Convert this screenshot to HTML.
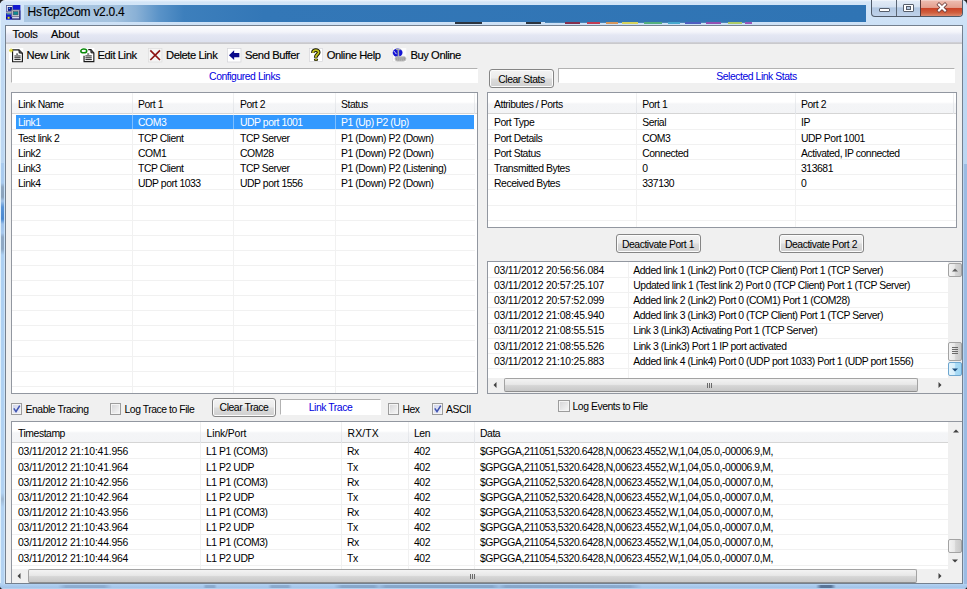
<!DOCTYPE html>
<html><head><meta charset="utf-8"><title>HsTcp2Com v2.0.4</title>
<style>
html,body{margin:0;padding:0;}
body{width:967px;height:589px;overflow:hidden;position:relative;background:#222;font-family:"Liberation Sans",sans-serif;font-size:10px;color:#000;}
div{position:absolute;box-sizing:border-box;white-space:nowrap;}
#frame{left:0;top:0;width:967px;height:589px;background:linear-gradient(#eef6fd 0,#d3e5f7 2px,#cde1f6 24px,#c0d9f3 60px,#b7d3f0 300px,#b4d2f1 589px);border-radius:5px 5px 4px 4px;overflow:hidden;}
#fl{left:0;top:3px;width:1px;height:580px;background:#dff0fc;}
#fl3{left:1px;top:163px;width:3.6px;height:421px;background:linear-gradient(#aacbee 0,#a9caee 20px,#8ea6c0 24px,#8aa2bc 34px,#a4c4e8 38px,#5a94d6 44px,#4a88d0 56px,#9fc2ea 61px,#a8c9ee 70px,#8fa8c4 74px,#8ea8c4 86px,#add0f2 92px,#b2d2f2 330px,#9fb8d2 336px,#b2d2f2 344px,#b4d3f2 421px);}
#fb2{left:0;top:585px;width:967px;height:3px;filter:blur(0.6px);background:linear-gradient(90deg,rgba(110,140,175,0) 0,rgba(110,140,175,0) 58px,rgba(110,140,175,.45) 66px,rgba(110,140,175,.45) 104px,rgba(110,140,175,0) 112px,rgba(110,140,175,0) 203px,rgba(110,140,175,.5) 206px,rgba(110,140,175,.5) 214px,rgba(110,140,175,0) 217px,rgba(110,140,175,0) 268px,rgba(110,140,175,.5) 272px,rgba(110,140,175,.5) 288px,rgba(110,140,175,0) 292px,rgba(110,140,175,0) 334px,rgba(110,140,175,.55) 342px,rgba(110,140,175,.55) 374px,rgba(110,140,175,.2) 379px,rgba(110,140,175,.55) 386px,rgba(110,140,175,.55) 492px,rgba(110,140,175,.2) 499px,rgba(110,140,175,.55) 506px,rgba(110,140,175,.5) 630px,rgba(110,140,175,0) 642px,rgba(70,95,130,0) 816px,rgba(70,95,130,.8) 821px,rgba(70,95,130,.8) 831px,rgba(70,95,130,0) 836px);}
#fl2{left:4px;top:24px;width:1px;height:560px;background:#cbe3f9;}
#fr{left:963px;top:164px;width:4px;height:425px;background:linear-gradient(90deg,#b9d4f0 0,#b9d4f0 1px,#9bbbe2 1px);}
#fb{left:0;top:584px;width:967px;height:5px;background:linear-gradient(#b4d3f2 0,#a9c9ed 2px,#a3c3e8 4px,#c4dcf4 5px);}
#glass{left:24px;top:5px;width:842px;height:17px;background:linear-gradient(90deg,#abc7e2 0,#a5c3df 90px,#8ab1d6 112px,#5a93c8 135px,#3d7fbc 160px,#3377b7 240px,#2f74b4 842px);}
#client{left:5px;top:25px;width:958px;height:559px;background:#f0f0f0;border:1px solid #74808f;}
#menubar{left:6px;top:26px;width:956px;height:18px;background:linear-gradient(#fdfdfe 0,#f3f4fa 6px,#e4e7f3 9px,#dde1ef 15.5px,#d2d3da 16px,#c9c9cd 17.5px,#e6e6e8 18px);}
.seg{font-size:11.2px;letter-spacing:-0.42px;color:#000;-webkit-text-stroke:0.15px #000;}
.lst{background:#fff;border:1px solid #9297a0;}
.gl{height:1px;background:#f1f1f1;}
.vl{width:1px;background:#f1f1f1;}
.hdr{background:linear-gradient(#fff 0,#fff 45%,#f4f5f7 55%,#f3f4f6 100%);border-bottom:1px solid #d5d5d5;}
.ht{font-size:10.4px;letter-spacing:-0.45px;padding-top:1px;}
.hs{width:1px;background:linear-gradient(#f2f2f2,#e0e3e8);}
.c{font-size:10.4px;letter-spacing:-0.45px;height:15px;line-height:15px;}
.ts{letter-spacing:-0.2px;}
.gp{letter-spacing:-0.41px;}
.w{color:#fff;}
.lbl{background:#fff;padding-top:0.8px;border-top:1px solid #b2b2b2;border-left:1px solid #b2b2b2;border-bottom:1px solid #fff;border-right:1px solid #fff;color:#0000e0;font-size:10.4px;letter-spacing:-0.45px;text-align:center;}
.btn{border:1px solid #858585;border-radius:3px;background:linear-gradient(#f3f3f3 0,#ebebeb 48%,#dddddd 52%,#cfcfcf 100%);box-shadow:inset 0 0 0 1px #fcfcfc;font-size:10.4px;letter-spacing:-0.45px;text-align:center;}
.cb{width:11.4px;height:11.4px;border:1px solid #9c9c9c;background:linear-gradient(135deg,#d4d4d6,#f8f8f8);box-shadow:inset 0 0 0 1px #f4f4f4;}
.cbk{background:linear-gradient(135deg,#cfd3ea,#f0f1fa);}
.cbt{font-size:10.4px;letter-spacing:-0.45px;height:13px;line-height:13px;}
.sb{background:#f0f0f0;}
.th{border:1px solid #a3a3a3;border-bottom-color:#8e8e8e;border-radius:2px;background:linear-gradient(#f3f3f3 0,#e8e8e8 45%,#d6d6d6 55%,#c8c8c8 100%);}
.tv{border:1px solid #a3a3a3;border-radius:2px;background:linear-gradient(90deg,#f3f3f3 0,#e8e8e8 45%,#d6d6d6 55%,#c8c8c8 100%);}
svg{position:absolute;overflow:visible;}
</style></head><body>
<div id="frame"><div id="fl"></div><div id="fl3"></div><div id="fl2"></div><div id="fr"></div><div id="fb"></div><div id="fb2"></div></div>
<div id="glass"></div>
<div id="bits" style="left:440px;top:21.4px;width:320px;height:2.2px;filter:blur(0.6px);opacity:.85">
<div style="left:15px;top:0.4px;width:27px;height:1.8px;background:#10161e"></div>
<div style="left:86px;top:0.4px;width:15px;height:1.8px;background:#10161e"></div>
<div style="left:105px;top:0;width:207px;height:1.2px;background:#3577b0"></div>
<div style="left:125px;top:0.6px;width:15px;height:1.6px;background:#7a1030"></div>
<div style="left:147px;top:0.6px;width:13px;height:1.6px;background:#c02038"></div>
<div style="left:166px;top:0.8px;width:12px;height:1.4px;background:#d88a40"></div>
<div style="left:182px;top:0.8px;width:16px;height:1.4px;background:#d8d040"></div>
<div style="left:204px;top:0.8px;width:18px;height:1.4px;background:#40a868"></div>
<div style="left:228px;top:0.8px;width:12px;height:1.4px;background:#30a0c8"></div>
<div style="left:245px;top:0.8px;width:16px;height:1.4px;background:#3848b8"></div>
<div style="left:266px;top:0.8px;width:15px;height:1.4px;background:#8838a8"></div>
<div style="left:288px;top:0.8px;width:14px;height:1.4px;background:#a8c850"></div>
<div style="left:305px;top:0.8px;width:7px;height:1.4px;background:#9040b0"></div>
</div>

<div class="seg" style="left:27.5px;top:4px;height:16px;line-height:16px;font-size:12px;letter-spacing:-0.28px;">HsTcp2Com v2.0.4</div>
<svg style="left:6.1px;top:4.9px" width="14.4" height="14.7" viewBox="0 0 16 16" preserveAspectRatio="none">
<rect x="0" y="0" width="16" height="16" fill="#1018d0"/>
<rect x="0" y="0" width="8" height="1" fill="#5a6088"/>
<rect x="0.5" y="0.8" width="7" height="6.4" fill="#f4f4f4" stroke="#50587a" stroke-width="0.6"/>
<rect x="2" y="2.2" width="4.6" height="4.2" fill="#0a148c"/>
<rect x="3" y="3" width="1.4" height="1.2" fill="#58c8f0"/>
<rect x="0" y="7.4" width="6.5" height="1.6" fill="#a8a8b0"/>
<rect x="0.8" y="9.2" width="5" height="1" fill="#78d878"/>
<rect x="6.5" y="5.5" width="8.6" height="7.2" fill="#d8d8dc" stroke="#7a7a86" stroke-width="0.9"/>
<rect x="8" y="7.2" width="5.4" height="3.6" fill="#108c94" stroke="#404858" stroke-width="0.6"/>
<rect x="0" y="13.6" width="7" height="1" fill="#10104a"/>
<rect x="1.8" y="12.8" width="2.2" height="2.2" fill="#e8e020"/>
<rect x="6.8" y="13.2" width="8" height="1.5" fill="#f0f0f0"/>
<rect x="6.5" y="14.8" width="9" height="1.2" fill="#50546a"/>
<rect x="14.6" y="6" width="1.4" height="10" fill="#3a3e78"/>
</svg>
<div style="left:871px;top:0;width:92px;height:17px;border:1px solid #4f5a68;border-top:none;border-radius:0 0 4px 4px;background:linear-gradient(#f6f9fd 0,#e0eaf6 1.5px,#d4e1f1 45%,#b1c7e1 48%,#bfd2ea 100%);overflow:hidden">
<div style="left:48px;top:0;width:44px;height:17px;background:linear-gradient(#f6ddd7 0,#ecb8ab 1.5px,#e4a08f 44%,#ca4226 48%,#d05f3e 75%,#e0957c 100%);box-shadow:inset -1px -1px 0 rgba(255,225,215,.55)"></div>
<div style="left:24px;top:0;width:1px;height:17px;background:#5a6674"></div>
<div style="left:48px;top:0;width:1px;height:17px;background:#5c3a3a"></div>
</div>
<div style="left:879px;top:8px;width:11px;height:4px;background:#fff;border:1px solid #555e6b;border-radius:1px"></div>
<div style="left:903px;top:4px;width:11px;height:8px;background:#fff;border:1px solid #555e6b;border-radius:1px"></div>
<div style="left:906px;top:6px;width:5px;height:4px;background:#b9cbe2;border:1px solid #555e6b"></div>
<svg style="left:937px;top:3px" width="10" height="9" viewBox="0 0 10 9"><path d="M2 1.6 L8 7.4 M8 1.6 L2 7.4" stroke="#6a3a38" stroke-width="3.6" stroke-linecap="square"/><path d="M2 1.6 L8 7.4 M8 1.6 L2 7.4" stroke="#fff" stroke-width="2.1" stroke-linecap="square"/></svg>

<div id="client"></div><div id="menubar"></div>
<div class="seg" style="left:12.5px;top:27px;height:15px;line-height:15px;letter-spacing:-0.2px">Tools</div>
<div class="seg" style="left:51px;top:27px;height:15px;line-height:15px;letter-spacing:-0.2px">About</div>
<div class="seg" style="left:26.5px;top:47px;height:16px;line-height:16px">New Link</div>
<div class="seg" style="left:97.5px;top:47px;height:16px;line-height:16px">Edit Link</div>
<div class="seg" style="left:166px;top:47px;height:16px;line-height:16px">Delete Link</div>
<div class="seg" style="left:245px;top:47px;height:16px;line-height:16px">Send Buffer</div>
<div class="seg" style="left:326.7px;top:47px;height:16px;line-height:16px">Online Help</div>
<div class="seg" style="left:410.4px;top:47px;height:16px;line-height:16px">Buy Online</div>
<svg style="left:9.2px;top:47.8px" width="14.3" height="14.4" viewBox="0 0 16 16"><rect width="16" height="16" fill="#fff"/><path d="M4 2 H11.2 L15 5.8 V15.3 H4 Z" fill="#fff" stroke="#1a1a1a" stroke-width="1.3"/><path d="M11 2 L11.4 5.6 L15 5.8" fill="#555" stroke="#1a1a1a" stroke-width="1"/><path d="M8 6.8H10.2M6 8.9H13M6 10.9H13M6 12.9H13" stroke="#1a1a1a" stroke-width="1.1"/><path d="M0.6 1l3.4 3.4M4 1l-3.4 3.4M2.3 0.3v4.8M0 2.7h4.6" stroke="#d8d020" stroke-width="0.9"/></svg>
<svg style="left:79.8px;top:47.6px" width="14.4" height="14.4" viewBox="0 0 16 16"><rect width="16" height="16" fill="#fff"/><path d="M9.2 1.9 H12.2 L15.4 5.4 V15.2 H4.5 V8.6" fill="none" stroke="#1a1a1a" stroke-width="1.3"/><path d="M12 2 L12.2 5.4 L15.4 5.6" fill="#555" stroke="#1a1a1a" stroke-width="1"/><path d="M8 6.7H10.2M6 8.8H13.1M6 10.9H13.1M6 12.9H13.1" stroke="#1a1a1a" stroke-width="1.1"/><ellipse cx="4.2" cy="3.3" rx="3.3" ry="2.1" fill="#fff" stroke="#0a8a0a" stroke-width="1.7"/></svg>
<svg style="left:147.9px;top:47.8px" width="14.3" height="14.4" viewBox="0 0 16 16"><rect x="0.4" y="0.4" width="15.2" height="15.2" fill="#f5f5f5" stroke="#dcdcdc" stroke-width="0.8"/><path d="M2.6 2.6 L13.4 13.4 M13.4 2.6 L2.6 13.4" stroke="#8e1414" stroke-width="1.9"/></svg>
<svg style="left:227.3px;top:47.8px" width="14.3" height="14.4" viewBox="0 0 16 16"><rect x="0.4" y="0.4" width="15.2" height="15.2" fill="#fff" stroke="#d4d4d8" stroke-width="0.8"/><path d="M2.2 8 L8 2.6 V5.6 H13.8 V10.4 H8 V13.4 Z" fill="#0c0c8c"/></svg>
<svg style="left:308.8px;top:47.8px" width="14.2" height="13.8" viewBox="0 0 16 16"><rect x="0.4" y="0.4" width="15.2" height="15.2" fill="#fff" stroke="#d4d4d8" stroke-width="0.8"/><path d="M4.4 5.6 C4 1.4 11.4 1.6 11 5.2 C10.8 7.4 7.6 7.4 7.6 11.2" stroke="#141400" stroke-width="4.3" fill="none"/><ellipse cx="7.9" cy="13.6" rx="2.5" ry="1.5" fill="#141400"/><path d="M4.4 5.6 C4 1.4 11.4 1.6 11 5.2 C10.8 7.4 7.6 7.4 7.6 11" stroke="#c4c420" stroke-width="2.1" fill="none"/><ellipse cx="7.9" cy="13.5" rx="1.5" ry="0.8" fill="#c4c420"/></svg>
<svg style="left:392.3px;top:47.8px" width="14.4" height="14" viewBox="0 0 16 16"><rect width="16" height="16" fill="#fbfbfb"/><path d="M0.4 0 V15.6 H6" stroke="#e2e2e2" stroke-width="0.8" fill="none"/><ellipse cx="6.2" cy="5.5" rx="5.6" ry="4.8" fill="#1414d4"/><path d="M4.4 1.2 C7 2.4 8.6 2 9.6 1.6 M6.8 2.6 C7.4 5 7 7 7.2 9.6" stroke="#a0a4ac" stroke-width="1.7" fill="none"/><path d="M1.8 3.4 C3 5 4 5.6 4.8 7" stroke="#e8ecf8" stroke-width="1.1" fill="none"/><rect x="3.2" y="9.6" width="12.6" height="5.4" rx="2.7" fill="#9a9a9a" stroke="#c8c8c8" stroke-width="0.9"/><path d="M5 11h9M5 12.4h9M5.6 13.8h8" stroke="#d8d8d8" stroke-width="0.6" stroke-dasharray="1.4 0.8"/></svg>
<div class="lbl" style="left:11px;top:68px;width:467px;height:15px;line-height:13px">Configured Links</div>
<div class="lst" style="left:11px;top:92px;width:467px;height:302px"></div>
<div class="gl" style="left:12px;top:129.0px;width:463px"></div>
<div class="gl" style="left:12px;top:144.1px;width:463px"></div>
<div class="gl" style="left:12px;top:159.2px;width:463px"></div>
<div class="gl" style="left:12px;top:174.3px;width:463px"></div>
<div class="gl" style="left:12px;top:189.4px;width:463px"></div>
<div class="gl" style="left:12px;top:204.5px;width:463px"></div>
<div class="gl" style="left:12px;top:219.6px;width:463px"></div>
<div class="gl" style="left:12px;top:234.7px;width:463px"></div>
<div class="gl" style="left:12px;top:249.8px;width:463px"></div>
<div class="gl" style="left:12px;top:264.9px;width:463px"></div>
<div class="gl" style="left:12px;top:280.0px;width:463px"></div>
<div class="gl" style="left:12px;top:295.1px;width:463px"></div>
<div class="gl" style="left:12px;top:310.2px;width:463px"></div>
<div class="gl" style="left:12px;top:325.3px;width:463px"></div>
<div class="gl" style="left:12px;top:340.4px;width:463px"></div>
<div class="gl" style="left:12px;top:355.5px;width:463px"></div>
<div class="gl" style="left:12px;top:370.6px;width:463px"></div>
<div class="gl" style="left:12px;top:385.7px;width:463px"></div>
<div class="vl" style="left:132px;top:114px;height:279px"></div>
<div class="vl" style="left:233px;top:114px;height:279px"></div>
<div class="vl" style="left:335px;top:114px;height:279px"></div>
<div class="hdr" style="left:12px;top:93px;width:465px;height:21px"></div>
<div class="ht" style="left:18px;top:93px;height:21px;line-height:21px">Link Name</div>
<div class="hs" style="left:132px;top:93px;height:21px"></div>
<div class="ht" style="left:138px;top:93px;height:21px;line-height:21px">Port 1</div>
<div class="hs" style="left:233px;top:93px;height:21px"></div>
<div class="ht" style="left:240px;top:93px;height:21px;line-height:21px">Port 2</div>
<div class="hs" style="left:335px;top:93px;height:21px"></div>
<div class="ht" style="left:341px;top:93px;height:21px;line-height:21px">Status</div>
<div class="hs" style="left:474px;top:93px;height:21px"></div>
<div style="left:16px;top:115px;width:458px;height:14px;background:#3399ff"></div>
<div style="left:132px;top:115px;width:1px;height:14px;background:#7fbfff"></div>
<div style="left:233px;top:115px;width:1px;height:14px;background:#7fbfff"></div>
<div style="left:335px;top:115px;width:1px;height:14px;background:#7fbfff"></div>
<div class="c w " style="left:18px;top:115.0px">Link1</div>
<div class="c w " style="left:138px;top:115.0px">COM3</div>
<div class="c w " style="left:240px;top:115.0px">UDP port 1001</div>
<div class="c w " style="left:341px;top:115.0px">P1 (Up) P2 (Up)</div>
<div class="c  " style="left:18px;top:130.6px">Test link 2</div>
<div class="c  " style="left:138px;top:130.6px">TCP Client</div>
<div class="c  " style="left:240px;top:130.6px">TCP Server</div>
<div class="c  " style="left:341px;top:130.6px">P1 (Down) P2 (Down)</div>
<div class="c  " style="left:18px;top:145.7px">Link2</div>
<div class="c  " style="left:138px;top:145.7px">COM1</div>
<div class="c  " style="left:240px;top:145.7px">COM28</div>
<div class="c  " style="left:341px;top:145.7px">P1 (Down) P2 (Down)</div>
<div class="c  " style="left:18px;top:160.8px">Link3</div>
<div class="c  " style="left:138px;top:160.8px">TCP Client</div>
<div class="c  " style="left:240px;top:160.8px">TCP Server</div>
<div class="c  " style="left:341px;top:160.8px">P1 (Down) P2 (Listening)</div>
<div class="c  " style="left:18px;top:175.9px">Link4</div>
<div class="c  " style="left:138px;top:175.9px">UDP port 1033</div>
<div class="c  " style="left:240px;top:175.9px">UDP port 1556</div>
<div class="c  " style="left:341px;top:175.9px">P1 (Down) P2 (Down)</div>
<div class="btn" style="left:489px;top:69px;width:65px;height:19px;line-height:19.5px">Clear Stats</div>
<div class="lbl" style="left:558px;top:68px;width:397px;height:15px;line-height:13px">Selected Link Stats</div>
<div class="lst" style="left:487px;top:92px;width:470px;height:136px"></div>
<div class="gl" style="left:488px;top:129.0px;width:468px"></div>
<div class="gl" style="left:488px;top:144.1px;width:468px"></div>
<div class="gl" style="left:488px;top:159.2px;width:468px"></div>
<div class="gl" style="left:488px;top:174.3px;width:468px"></div>
<div class="gl" style="left:488px;top:189.4px;width:468px"></div>
<div class="gl" style="left:488px;top:204.5px;width:468px"></div>
<div class="gl" style="left:488px;top:219.6px;width:468px"></div>
<div class="vl" style="left:636px;top:114px;height:113px"></div>
<div class="vl" style="left:795px;top:114px;height:113px"></div>
<div class="hdr" style="left:488px;top:93px;width:468px;height:21px"></div>
<div class="ht" style="left:494px;top:93px;height:21px;line-height:21px">Attributes / Ports</div>
<div class="hs" style="left:636px;top:93px;height:21px"></div>
<div class="ht" style="left:642.2px;top:93px;height:21px;line-height:21px">Port 1</div>
<div class="hs" style="left:795px;top:93px;height:21px"></div>
<div class="ht" style="left:801px;top:93px;height:21px;line-height:21px">Port 2</div>
<div class="hs" style="left:953px;top:93px;height:21px"></div>
<div class="c  " style="left:494px;top:115.0px">Port Type</div>
<div class="c  " style="left:642.2px;top:115.0px">Serial</div>
<div class="c  " style="left:801px;top:115.0px">IP</div>
<div class="c  " style="left:494px;top:130.6px">Port Details</div>
<div class="c  " style="left:642.2px;top:130.6px">COM3</div>
<div class="c  " style="left:801px;top:130.6px">UDP Port 1001</div>
<div class="c  " style="left:494px;top:145.7px">Port Status</div>
<div class="c  " style="left:642.2px;top:145.7px">Connected</div>
<div class="c  " style="left:801px;top:145.7px">Activated, IP connected</div>
<div class="c  " style="left:494px;top:160.8px">Transmitted Bytes</div>
<div class="c  " style="left:642.2px;top:160.8px">0</div>
<div class="c  " style="left:801px;top:160.8px">313681</div>
<div class="c  " style="left:494px;top:175.9px">Received Bytes</div>
<div class="c  " style="left:642.2px;top:175.9px">337130</div>
<div class="c  " style="left:801px;top:175.9px">0</div>
<div class="btn" style="left:615.5px;top:234px;width:85px;height:19px;line-height:19px">Deactivate Port 1</div>
<div class="btn" style="left:778.5px;top:234px;width:85px;height:19px;line-height:19px">Deactivate Port 2</div>
<div class="lst" style="left:487px;top:261px;width:475px;height:133px;border-right:none"></div>
<div class="gl" style="left:488px;top:277.2px;width:460px"></div>
<div class="gl" style="left:488px;top:292.3px;width:460px"></div>
<div class="gl" style="left:488px;top:307.4px;width:460px"></div>
<div class="gl" style="left:488px;top:322.5px;width:460px"></div>
<div class="gl" style="left:488px;top:337.6px;width:460px"></div>
<div class="gl" style="left:488px;top:352.7px;width:460px"></div>
<div class="gl" style="left:488px;top:367.8px;width:460px"></div>
<div class="vl" style="left:628px;top:262px;height:116px"></div>
<div class="c  ts" style="left:494px;top:263.0px">03/11/2012 20:56:56.084</div>
<div class="c  " style="left:633.3px;top:263.0px">Added link 1 (Link2) Port 0 (TCP Client) Port 1 (TCP Server)</div>
<div class="c  ts" style="left:494px;top:278.1px">03/11/2012 20:57:25.107</div>
<div class="c  " style="left:633.3px;top:278.1px">Updated link 1 (Test link 2) Port 0 (TCP Client) Port 1 (TCP Server)</div>
<div class="c  ts" style="left:494px;top:293.2px">03/11/2012 20:57:52.099</div>
<div class="c  " style="left:633.3px;top:293.2px">Added link 2 (Link2) Port 0 (COM1) Port 1 (COM28)</div>
<div class="c  ts" style="left:494px;top:308.3px">03/11/2012 21:08:45.940</div>
<div class="c  " style="left:633.3px;top:308.3px">Added link 3 (Link3) Port 0 (TCP Client) Port 1 (TCP Server)</div>
<div class="c  ts" style="left:494px;top:323.4px">03/11/2012 21:08:55.515</div>
<div class="c  " style="left:633.3px;top:323.4px">Link 3 (Link3) Activating Port 1 (TCP Server)</div>
<div class="c  ts" style="left:494px;top:338.5px">03/11/2012 21:08:55.526</div>
<div class="c  " style="left:633.3px;top:338.5px">Link 3 (Link3) Port 1 IP port activated</div>
<div class="c  ts" style="left:494px;top:353.6px">03/11/2012 21:10:25.883</div>
<div class="c  " style="left:633.3px;top:353.6px">Added link 4 (Link4) Port 0 (UDP port 1033) Port 1 (UDP port 1556)</div>
<div class="sb" style="left:948px;top:262px;width:14px;height:116px"></div>
<div class="sb" style="left:488px;top:378px;width:474px;height:15px"></div>
<div class="tv" style="left:948px;top:263px;width:14px;height:14px"></div>
<svg style="left:952px;top:268px" width="6" height="4" viewBox="0 0 6 4"><path d="M0 3.5 L3 0.5 L6 3.5Z" fill="#606060"/></svg>
<div class="tv" style="left:948px;top:342px;width:14px;height:19px"></div>
<div style="left:952px;top:347px;width:6px;height:1px;background:#6a6a6a;box-shadow:0 2px 0 #6a6a6a,0 4px 0 #6a6a6a,0 6px 0 #6a6a6a"></div>
<div style="left:948px;top:362px;width:14px;height:14px;border:1px solid #6ea6cf;border-radius:2px;background:linear-gradient(90deg,#e3f4fc 0,#d6effc 45%,#a9dbf6 55%,#9cd5f3 100%)"></div>
<svg style="left:952px;top:368px" width="6" height="4" viewBox="0 0 6 4"><path d="M0 0.5 L3 3.5 L6 0.5Z" fill="#1a4a7a"/></svg>
<svg style="left:493px;top:382px" width="4" height="6" viewBox="0 0 4 6"><path d="M3.5 0 L0.5 3 L3.5 6Z" fill="#404040"/></svg>
<svg style="left:938px;top:382px" width="4" height="6" viewBox="0 0 4 6"><path d="M0.5 0 L3.5 3 L0.5 6Z" fill="#404040"/></svg>
<div class="th" style="left:504px;top:378px;width:414px;height:14px"></div>
<div style="left:707px;top:383px;width:1px;height:5px;background:#6a6a6a;box-shadow:2px 0 0 #6a6a6a,4px 0 0 #6a6a6a"></div>
<div class="cb cbk" style="left:10.7px;top:403.2px"></div><svg style="left:12.7px;top:405.2px" width="8" height="8" viewBox="0 0 8 8"><path d="M0.8 3.4 L3 6.6 L6.8 0.6" stroke="#4054b0" stroke-width="1.6" fill="none"/></svg>
<div class="cbt" style="left:25.5px;top:402.8px">Enable Tracing</div>
<div class="cb" style="left:110px;top:403.2px"></div>
<div class="cbt" style="left:124.5px;top:402.8px">Log Trace to File</div>
<div class="btn" style="left:212px;top:398px;width:64px;height:19px;line-height:17px">Clear Trace</div>
<div class="lbl" style="left:280px;top:399px;width:101px;height:16px;line-height:13px">Link Trace</div>
<div class="cb" style="left:387.9px;top:403.2px"></div>
<div class="cbt" style="left:402.4px;top:402.8px">Hex</div>
<div class="cb cbk" style="left:431.7px;top:403.2px"></div><svg style="left:433.7px;top:405.2px" width="8" height="8" viewBox="0 0 8 8"><path d="M0.8 3.4 L3 6.6 L6.8 0.6" stroke="#4054b0" stroke-width="1.6" fill="none"/></svg>
<div class="cbt" style="left:446px;top:402.8px">ASCII</div>
<div class="cb" style="left:558.2px;top:400.4px"></div>
<div class="cbt" style="left:572.5px;top:399.8px">Log Events to File</div>
<div class="lst" style="left:11px;top:421px;width:951px;height:162px;border-right:none;border-bottom:none"></div>
<div class="gl" style="left:12px;top:458.3px;width:936px"></div>
<div class="gl" style="left:12px;top:473.5px;width:936px"></div>
<div class="gl" style="left:12px;top:488.6px;width:936px"></div>
<div class="gl" style="left:12px;top:503.8px;width:936px"></div>
<div class="gl" style="left:12px;top:519.0px;width:936px"></div>
<div class="gl" style="left:12px;top:534.1px;width:936px"></div>
<div class="gl" style="left:12px;top:549.3px;width:936px"></div>
<div class="gl" style="left:12px;top:564.5px;width:936px"></div>
<div class="vl" style="left:200px;top:443px;height:126px"></div>
<div class="vl" style="left:341px;top:443px;height:126px"></div>
<div class="vl" style="left:408px;top:443px;height:126px"></div>
<div class="vl" style="left:474px;top:443px;height:126px"></div>
<div class="hdr" style="left:12px;top:422px;width:936px;height:21px"></div>
<div class="ht" style="left:18px;top:422px;height:21px;line-height:21px">Timestamp</div>
<div class="hs" style="left:200px;top:422px;height:21px"></div>
<div class="ht" style="left:206.6px;top:422px;height:21px;line-height:21px"><span style="letter-spacing:-0.15px">Link/Port</span></div>
<div class="hs" style="left:341px;top:422px;height:21px"></div>
<div class="ht" style="left:347.6px;top:422px;height:21px;line-height:21px"><span style="letter-spacing:0.15px">RX/TX</span></div>
<div class="hs" style="left:408px;top:422px;height:21px"></div>
<div class="ht" style="left:414px;top:422px;height:21px;line-height:21px">Len</div>
<div class="hs" style="left:474px;top:422px;height:21px"></div>
<div class="ht" style="left:480px;top:422px;height:21px;line-height:21px">Data</div>
<div class="c  ts" style="left:18px;top:444.3px">03/11/2012 21:10:41.956</div>
<div class="c  " style="left:206px;top:444.3px">L1 P1 (COM3)</div>
<div class="c  " style="left:347px;top:444.3px">Rx</div>
<div class="c  " style="left:414px;top:444.3px">402</div>
<div class="c  gp" style="left:480px;top:444.3px">$GPGGA,211051,5320.6428,N,00623.4552,W,1,04,05.0,-00006.9,M,</div>
<div class="c  ts" style="left:18px;top:459.5px">03/11/2012 21:10:41.964</div>
<div class="c  " style="left:206px;top:459.5px">L1 P2 UDP</div>
<div class="c  " style="left:347px;top:459.5px">Tx</div>
<div class="c  " style="left:414px;top:459.5px">402</div>
<div class="c  gp" style="left:480px;top:459.5px">$GPGGA,211051,5320.6428,N,00623.4552,W,1,04,05.0,-00006.9,M,</div>
<div class="c  ts" style="left:18px;top:474.6px">03/11/2012 21:10:42.956</div>
<div class="c  " style="left:206px;top:474.6px">L1 P1 (COM3)</div>
<div class="c  " style="left:347px;top:474.6px">Rx</div>
<div class="c  " style="left:414px;top:474.6px">402</div>
<div class="c  gp" style="left:480px;top:474.6px">$GPGGA,211052,5320.6428,N,00623.4552,W,1,04,05.0,-00007.0,M,</div>
<div class="c  ts" style="left:18px;top:489.8px">03/11/2012 21:10:42.964</div>
<div class="c  " style="left:206px;top:489.8px">L1 P2 UDP</div>
<div class="c  " style="left:347px;top:489.8px">Tx</div>
<div class="c  " style="left:414px;top:489.8px">402</div>
<div class="c  gp" style="left:480px;top:489.8px">$GPGGA,211052,5320.6428,N,00623.4552,W,1,04,05.0,-00007.0,M,</div>
<div class="c  ts" style="left:18px;top:505.0px">03/11/2012 21:10:43.956</div>
<div class="c  " style="left:206px;top:505.0px">L1 P1 (COM3)</div>
<div class="c  " style="left:347px;top:505.0px">Rx</div>
<div class="c  " style="left:414px;top:505.0px">402</div>
<div class="c  gp" style="left:480px;top:505.0px">$GPGGA,211053,5320.6428,N,00623.4552,W,1,04,05.0,-00007.0,M,</div>
<div class="c  ts" style="left:18px;top:520.1px">03/11/2012 21:10:43.964</div>
<div class="c  " style="left:206px;top:520.1px">L1 P2 UDP</div>
<div class="c  " style="left:347px;top:520.1px">Tx</div>
<div class="c  " style="left:414px;top:520.1px">402</div>
<div class="c  gp" style="left:480px;top:520.1px">$GPGGA,211053,5320.6428,N,00623.4552,W,1,04,05.0,-00007.0,M,</div>
<div class="c  ts" style="left:18px;top:535.3px">03/11/2012 21:10:44.956</div>
<div class="c  " style="left:206px;top:535.3px">L1 P1 (COM3)</div>
<div class="c  " style="left:347px;top:535.3px">Rx</div>
<div class="c  " style="left:414px;top:535.3px">402</div>
<div class="c  gp" style="left:480px;top:535.3px">$GPGGA,211054,5320.6428,N,00623.4552,W,1,04,05.0,-00007.0,M,</div>
<div class="c  ts" style="left:18px;top:550.5px">03/11/2012 21:10:44.964</div>
<div class="c  " style="left:206px;top:550.5px">L1 P2 UDP</div>
<div class="c  " style="left:347px;top:550.5px">Tx</div>
<div class="c  " style="left:414px;top:550.5px">402</div>
<div class="c  gp" style="left:480px;top:550.5px">$GPGGA,211054,5320.6428,N,00623.4552,W,1,04,05.0,-00007.0,M,</div>
<div class="sb" style="left:948px;top:422px;width:14px;height:147px"></div>
<div class="sb" style="left:12px;top:569px;width:950px;height:14px"></div>
<svg style="left:953px;top:428.6px" width="6" height="4" viewBox="0 0 6 4"><path d="M0 3.5 L3 0.5 L6 3.5Z" fill="#404040"/></svg>
<svg style="left:952px;top:559px" width="6" height="4" viewBox="0 0 6 4"><path d="M0 0.5 L3 3.5 L6 0.5Z" fill="#404040"/></svg>
<div class="tv" style="left:948px;top:539px;width:14px;height:14px"></div>
<svg style="left:17px;top:573px" width="4" height="6" viewBox="0 0 4 6"><path d="M3.5 0 L0.5 3 L3.5 6Z" fill="#404040"/></svg>
<svg style="left:938px;top:573px" width="4" height="6" viewBox="0 0 4 6"><path d="M0.5 0 L3.5 3 L0.5 6Z" fill="#404040"/></svg>
<div class="th" style="left:28px;top:569px;width:889px;height:14px"></div>
<div style="left:470px;top:574px;width:1px;height:5px;background:#6a6a6a;box-shadow:2px 0 0 #6a6a6a,4px 0 0 #6a6a6a"></div>
</body></html>
